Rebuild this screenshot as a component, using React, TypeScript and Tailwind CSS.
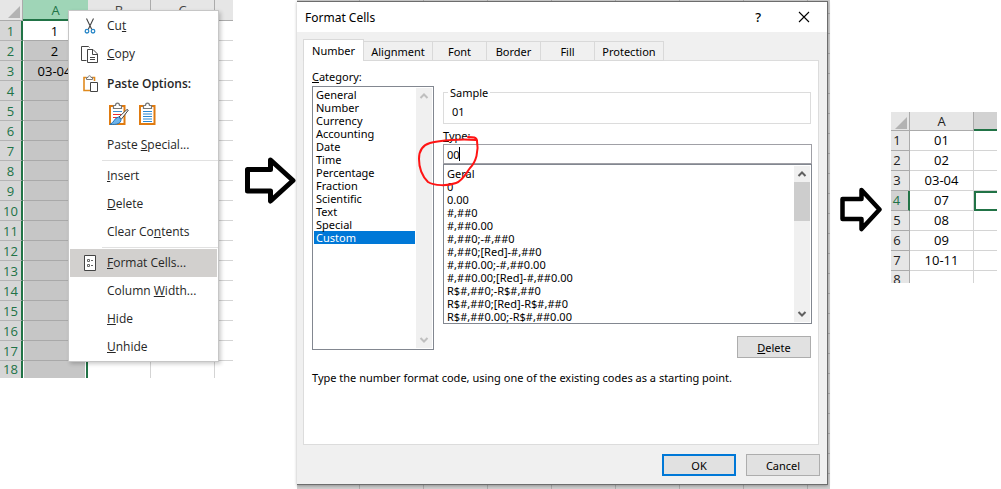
import { useState } from "react";
import type { ReactNode } from "react";

const rows18 = Array.from({ length: 18 }, (_, i) => i + 1);
const leftValues = ["1", "2", "03-04"];
const rightRows = ["01", "02", "03-04", "07", "08", "09", "10-11", ""];

const categories = [
  "General", "Number", "Currency", "Accounting", "Date", "Time",
  "Percentage", "Fraction", "Scientific", "Text", "Special", "Custom",
];

const formats = [
  "Geral", "0", "0.00", "#,##0", "#,##0.00", "#,##0;-#,##0",
  "#,##0;[Red]-#,##0", "#,##0.00;-#,##0.00", "#,##0.00;[Red]-#,##0.00",
  "R$#,##0;-R$#,##0", "R$#,##0;[Red]-R$#,##0", "R$#,##0.00;-R$#,##0.00",
];

const tabs = [
  { name: "Number", size: "w-[61px]" },
  { name: "Alignment", size: "w-[69px]" },
  { name: "Font", size: "w-[54px]" },
  { name: "Border", size: "w-[54px]" },
  { name: "Fill", size: "w-[54px]" },
  { name: "Protection", size: "w-[69px]" },
];

function Corner() {
  return (
    <svg viewBox="0 0 12 12" className="ml-auto mr-0.5 mt-1 block size-3" aria-hidden="true">
      <path d="M12 0V12H0Z" fill="#b3b3b3" />
    </svg>
  );
}

function CutIcon() {
  return (
    <svg viewBox="0 0 12 16" className="h-4 w-3" fill="none" aria-hidden="true">
      <path d="M2.5 .5 7.8 11.5M9.5 .5 4.2 11.5" stroke="#444" strokeWidth="1.1" />
      <circle cx="3" cy="13.2" r="1.8" stroke="#2b88c8" strokeWidth="1.3" />
      <circle cx="9" cy="13.2" r="1.8" stroke="#2b88c8" strokeWidth="1.3" />
    </svg>
  );
}

function CopyIcon() {
  return (
    <svg viewBox="0 0 17 17" className="size-[17px]" fill="none" stroke="#444" aria-hidden="true">
      <path d="M5.5 14.5H.5V.5H7.5L8.5 1.5" />
      <path d="M6.5 3.5H12L16.5 8V16.5H6.5Z" fill="#fff" />
      <path d="M11.5 4V8.5H16M9 11.5H14M9 13.5H14" />
    </svg>
  );
}

function PasteIcon() {
  return (
    <svg viewBox="0 0 15 17" className="h-[17px] w-[15px]" fill="none" aria-hidden="true">
      <path d="M3.5 2.5H1V15.5H7M9 2.5H11.5V6" stroke="#e08a1e" strokeWidth="1.6" />
      <path d="M3.5 4.5V2.5H5C5 .2 8 .2 8 2.5H9.5V4.5Z" fill="#fff" stroke="#777" />
      <path d="M7.5 7.5H14.5V16.5H7.5Z" fill="#fff" stroke="#444" />
    </svg>
  );
}

function Clipboard({ brush }: { brush?: boolean }) {
  return (
    <svg viewBox="0 0 20 23" className="h-[23px] w-5" fill="none" aria-hidden="true">
      <path d="M1 4H15.5V22H1Z" fill="#fff" stroke="#e07b10" strokeWidth="2" />
      <path d="M4.5 6.5V3.5H6.500C6.500 .2 10.500 .2 10.500 3.500H12.500V6.500Z" fill="#fff" stroke="#777" strokeWidth="1.200" />
      {brush ? (
        <>
          <path d="M4 9.500H13" stroke="#3f8fd0" />
          <path d="M4 12.500H12M4 15.500H9" stroke="#f03030" />
          <path d="M19.300 8.200 12.500 17 10 15 18 7.500Z" fill="#fff" stroke="#444" />
          <path d="M9.500 15 12 17.200C12 21.500 8 23 1 22.300C5 21 5.500 15.500 9.500 15Z" fill="#6db4ec" stroke="#1f72b8" />
        </>
      ) : (
        <path d="M4 9.500H13M4 12H13M4 14.500H13M4 17H13M4 19.500H13" stroke="#2b88d0" />
      )}
    </svg>
  );
}

function FormatIcon() {
  return (
    <svg viewBox="0 0 12 16" className="h-4 w-3" fill="none" stroke="#444" aria-hidden="true">
      <path d="M.5 .5H11.5V15.5H.5Z" fill="#fff" />
      <path d="M3.5 4.5H5.5V6.5H3.5ZM3.5 9.5H5.5V11.5H3.5ZM7 5.5H9M7 10.5H9" stroke="#666" />
    </svg>
  );
}

function MenuItem({ icon, active, children }: { icon?: ReactNode; active?: boolean; children: ReactNode }) {
  return (
    <button
      type="button"
      role="menuitem"
      className={`mx-px flex h-7 items-center text-left ${active ? "bg-[#d2d0ce]" : "bg-white"}`}
    >
      <span className="flex w-[37px] justify-center pl-0.5">{icon}</span>
      <span>{children}</span>
    </button>
  );
}

function ContextMenu() {
  return (
    <div
      role="menu"
      className="absolute left-[68px] top-2.5 flex w-[151px] flex-col border border-[#c6c6c6] bg-white pt-px font-['Open_Sans','Noto_Sans',sans-serif] text-[12px] leading-4 text-[#262626] shadow-[2px_2px_4px_rgba(0,0,0,0.2)]"
    >
      <MenuItem icon={<CutIcon />}>Cu<u>t</u></MenuItem>
      <MenuItem icon={<CopyIcon />}><u>C</u>opy</MenuItem>
      <div className="mx-px flex h-[31px] items-center font-semibold">
        <span className="flex w-[37px] justify-center pl-1"><PasteIcon /></span>
        <span>Paste Options:</span>
      </div>
      <div className="flex h-8 items-center gap-2.5 pb-1 pl-10">
        <button type="button" aria-label="Paste keeping source formatting"><Clipboard brush /></button>
        <button type="button" aria-label="Paste values"><Clipboard /></button>
      </div>
      <MenuItem>Paste <u>S</u>pecial...</MenuItem>
      <hr className="my-px ml-[33px] border-[#e1e1e1]" />
      <MenuItem><u>I</u>nsert</MenuItem>
      <MenuItem><u>D</u>elete</MenuItem>
      <MenuItem>Clear Co<u>n</u>tents</MenuItem>
      <hr className="my-px ml-[33px] border-[#e1e1e1]" />
      <MenuItem icon={<FormatIcon />} active><u>F</u>ormat Cells...</MenuItem>
      <MenuItem>Column <u>W</u>idth...</MenuItem>
      <MenuItem><u>H</u>ide</MenuItem>
      <MenuItem><u>U</u>nhide</MenuItem>
    </div>
  );
}

function SourceSheet() {
  return (
    <section className="relative w-[233px] shrink-0">
      <table className="w-full table-fixed border-separate border-spacing-0 text-center font-['Open_Sans','Noto_Sans',sans-serif] text-[13px] leading-[18px]">
        <colgroup>
          <col className="w-[23px]" />
          <col className="w-[65px]" />
          <col className="w-[63px]" />
          <col className="w-16" />
          <col />
        </colgroup>
        <thead>
          <tr className="h-[21px] bg-[#e6e6e6] text-[#444]">
            <th className="border-b border-r border-[#ababab] p-0"><Corner /></th>
            <th className="border-b-2 border-[#217346] bg-[#9fd5b7] p-0 font-normal text-[#217346]">A</th>
            <th className="border-b border-r border-[#ababab] p-0 font-normal">B</th>
            <th className="border-b border-r border-[#ababab] p-0 font-normal">C</th>
            <th className="border-b border-[#ababab] p-0" />
          </tr>
        </thead>
        <tbody>
          {rows18.map((n) => (
            <tr key={n} className={n === 18 ? "h-[17px]" : "h-5"}>
              <th className={`border-r-2 border-r-[#217346] bg-[#d6d6d6] p-0 font-normal text-[#217346] ${n === 18 ? "leading-[17px]" : "border-b border-b-[#b4b4b4]"}`}>{n}</th>
              <td className={`border-r-2 border-r-[#217346] p-0 text-black shadow-[inset_1px_0_0_#fff,inset_-1px_0_0_#fff] ${n === 1 ? "bg-white" : "bg-[#c6c6c6]"} ${n === 18 ? "" : "border-b border-b-[#a9a9a9]"}`}>{leftValues[n - 1]}</td>
              <td className={`border-r border-[#d4d4d4] p-0 ${n === 18 ? "" : "border-b"}`} />
              <td className={`border-r border-[#d4d4d4] p-0 ${n === 18 ? "" : "border-b"}`} />
              <td className={`border-[#d4d4d4] p-0 ${n === 18 ? "" : "border-b"}`} />
            </tr>
          ))}
        </tbody>
      </table>
      <ContextMenu />
    </section>
  );
}

function Chevron({ up, faint }: { up?: boolean; faint?: boolean }) {
  return (
    <svg viewBox="0 0 10 8" className="h-2 w-2.5" fill="none" aria-hidden="true">
      <path d={up ? "M1.5 6 5 2.5 8.5 6" : "M1.5 2 5 5.5 8.5 2"} stroke={faint ? "#bfbfbf" : "#606060"} strokeWidth="2" />
    </svg>
  );
}

function FormatDialog() {
  const [tab, setTab] = useState("Number");
  const [category, setCategory] = useState("Custom");
  const [code, setCode] = useState("00");
  return (
    <section className="min-w-0 flex-1 self-stretch bg-[#cfcfcf] bg-[repeating-linear-gradient(to_bottom,transparent_0_13px,#adadad_13px_14px,transparent_14px_20px),repeating-linear-gradient(to_right,transparent_0_62px,#adadad_62px_63px,transparent_63px_64px)] pb-1 pr-0.5 pt-px">
      <div
        role="dialog"
        aria-label="Format Cells"
        className="relative border-b border-r border-t border-[#6d6d6d] bg-[#f0f0f0] font-['Noto_Sans',sans-serif] text-[11px] leading-[13px] text-black shadow-[0_1px_3px_rgba(0,0,0,0.3)]"
      >
        <header className="flex h-[30px] items-center bg-white pl-2 pr-[17px]">
          <h1 className="flex-1 text-[12px]">Format Cells</h1>
          <button type="button" aria-label="Help" className="mr-[37px] text-[13px] font-medium">?</button>
          <button type="button" aria-label="Close">
            <svg viewBox="0 0 12 12" className="size-3" aria-hidden="true"><path d="M1 1 11 11M11 1 1 11" stroke="#000" strokeWidth="1.1" /></svg>
          </button>
        </header>

        <div className="pl-1.5 pr-2 pt-[7px]">
          <div role="tablist" className="-mb-px flex items-end">
            {tabs.map((t) => (
              <button
                key={t.name}
                type="button"
                role="tab"
                aria-selected={tab === t.name}
                onClick={() => setTab(t.name)}
                className={`border-[#d9d9d9] ${t.size} ${tab === t.name ? "relative h-[22px] border-x border-t bg-white" : "h-5 border-b border-r border-t"}`}
              >
                {t.name}
              </button>
            ))}
          </div>

          <div role="tabpanel" className="h-[385px] border border-[#dcdcdc] bg-white pl-2 pr-1.5 pt-[9px]">
            <div className="flex gap-[9px]">
              <div className="w-[122px]">
                <div id="category"><u>C</u>ategory:</div>
                <div className="mt-[3px] flex h-[264px] border border-[#828790] p-px">
                  <ul role="listbox" aria-labelledby="category" className="flex-1">
                    {categories.map((c) => (
                      <li
                        key={c}
                        role="option"
                        aria-selected={category === c}
                        onClick={() => setCategory(c)}
                        className={`pl-0.5 ${category === c ? "bg-[#0078d7] text-white" : ""}`}
                      >
                        {c}
                      </li>
                    ))}
                  </ul>
                  <div className="ml-px flex w-4 flex-col items-center justify-between bg-[#f0f0f0] py-1">
                    <Chevron up faint />
                    <Chevron faint />
                  </div>
                </div>
              </div>

              <div className="min-w-0 flex-1 pt-4">
                <fieldset className="mr-px h-[38px] border border-[#dcdcdc] pl-2">
                  <legend className="-ml-1 px-0.5">Sample</legend>
                  <output className="block pt-1.5">01</output>
                </fieldset>
                <label htmlFor="code" className="mt-[5px] block"><u>T</u>ype:</label>
                <div className="relative mt-0.5">
                  <input
                    id="code"
                    value={code}
                    onChange={(e) => setCode(e.target.value)}
                    className="block h-5 w-full border border-[#a0a0a6] pl-[3px] caret-transparent outline-none"
                  />
                  <span className="absolute left-4 top-[3px] h-3.5 w-px bg-black" aria-hidden="true" />
                </div>
                <div className="flex h-40 border border-[#828790] p-px">
                  <ul role="listbox" aria-label="Format codes" className="flex-1 pt-px">
                    {formats.map((f) => (
                      <li key={f} role="option" aria-selected="false" className="pl-0.5">{f}</li>
                    ))}
                  </ul>
                  <div className="flex w-4 flex-col items-center bg-[#f0f0f0] py-1">
                    <Chevron up />
                    <div className="mt-1 h-[39px] w-full bg-[#cdcdcd]" />
                    <div className="flex-1" />
                    <Chevron />
                  </div>
                </div>
                <div className="mr-px mt-3 flex justify-end">
                  <button type="button" className="h-[22px] w-[74px] border border-[#adadad] bg-[#e1e1e1]"><u>D</u>elete</button>
                </div>
              </div>
            </div>
            <p className="mt-[13px]">Type the number format code, using one of the existing codes as a starting point.</p>
          </div>
        </div>

        <footer className="flex justify-end gap-2.5 pb-2 pr-[7px] pt-[9px]">
          <button type="button" className="h-[22px] w-[74px] border-2 border-[#0078d7] bg-[#e1e1e1]">OK</button>
          <button type="button" className="h-[22px] w-[74px] border border-[#adadad] bg-[#e1e1e1]">Cancel</button>
        </footer>

        <svg viewBox="0 0 64 54" className="pointer-events-none absolute left-[119px] top-[131px] h-[54px] w-16" fill="none" aria-hidden="true">
          <path d="M52 4C57 4 61 4 61 8C63 18 60 29 54 35C49 42 46 48 40 50C32 53 18 53 12 49C5 42 3 33 3 26C3 17 7 12 14 10C25 7 45 6 60 7" stroke="#ff1414" strokeWidth="2" strokeLinecap="round" />
        </svg>
      </div>
    </section>
  );
}

function ResultSheet() {
  return (
    <section className="mt-28 w-[106px] shrink-0">
      <table className="w-full table-fixed border-separate border-spacing-0 text-center font-['Open_Sans','Noto_Sans',sans-serif] text-[13px] leading-[17px] text-black">
        <colgroup>
          <col className="w-[19px]" />
          <col className="w-16" />
          <col />
        </colgroup>
        <thead>
          <tr className="h-[19px] bg-[#e6e6e6] text-[#222]">
            <th className="border-b border-r border-[#ababab] p-0"><Corner /></th>
            <th className="border-b border-r border-[#ababab] p-0 font-normal">A</th>
            <th className="border-b-2 border-[#217346] bg-[#d2d2d2] p-0" />
          </tr>
        </thead>
        <tbody>
          {rightRows.map((v, i) => (
            <tr key={i} className={i === 7 ? "h-3" : "h-5"}>
              <th className={`border-[#ababab] p-0 pr-1.5 font-normal ${i === 3 ? "border-r-2 border-r-[#217346] bg-[#d2d2d2] text-[#217346]" : "border-r bg-[#e6e6e6] text-[#222]"} ${i === 7 ? "" : "border-b"}`}>
                <div className={i === 7 ? "h-3 overflow-hidden" : ""}>{i + 1}</div>
              </th>
              <td className={`border-r border-[#d4d4d4] p-0 ${i === 7 ? "" : "border-b"}`}>{v}</td>
              <td className={i === 3 ? "border-y-2 border-l-2 border-[#217346] p-0" : `border-[#d4d4d4] p-0 ${i === 7 ? "" : "border-b"}`} />
            </tr>
          ))}
        </tbody>
      </table>
    </section>
  );
}

export default function App() {
  return (
    <main className="flex items-start bg-white pr-1">
      <SourceSheet />
      <div className="mt-[155px] flex min-w-16 justify-end">
        <svg viewBox="0 0 52 50" className="h-[50px] w-[52px]" fill="none" stroke="#000" strokeWidth="5" strokeLinejoin="round" aria-hidden="true">
          <path d="M2.5 14.5H25.5V5L48 25.5 25.5 46V36H2.5Z" />
        </svg>
      </div>
      <FormatDialog />
      <div className="mt-[187px] flex min-w-[61px] justify-center">
        <svg viewBox="0 0 42 46" className="h-[46px] w-[42px]" fill="none" stroke="#000" strokeWidth="4.5" strokeLinejoin="round" aria-hidden="true">
          <path d="M2.5 12H21.5V3L39.5 22.5 21.5 42V32H2.5Z" />
        </svg>
      </div>
      <ResultSheet />
    </main>
  );
}
